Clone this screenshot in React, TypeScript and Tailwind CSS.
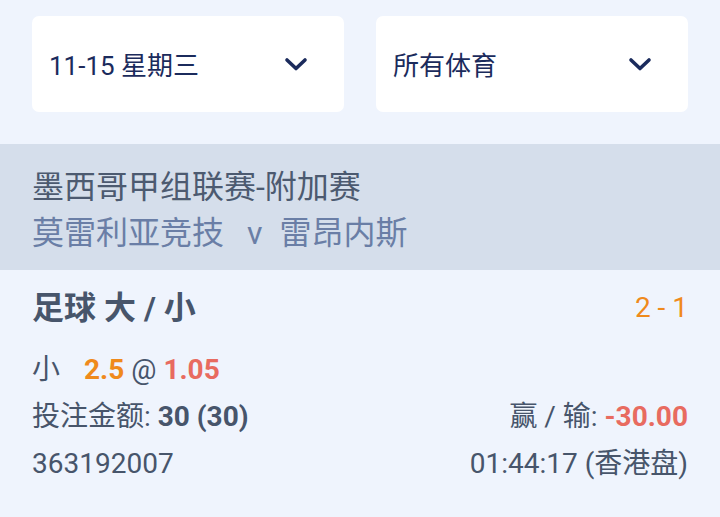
import React from "react";

function Chevron() {
  return (
    <svg width="24" height="15" viewBox="0 0 24 15" fill="none" className="shrink-0">
      <path d="M3 3 L12 11.5 L21 3" stroke="#1b2b5c" strokeWidth="3.6" strokeLinecap="round" strokeLinejoin="round" />
    </svg>
  );
}

function Select({ label }: { label: string }) {
  return (
    <div className="flex-1 h-[96px] bg-white rounded-[7px] flex items-center justify-between pl-[17px] pr-[36px]">
      <span className="text-[26px] text-[#1b2b5c] leading-none pt-[4px]">{label}</span>
      <Chevron />
    </div>
  );
}

export default function App() {
  return (
    <div
      className="w-[720px] h-[517px] bg-[#eff4fd] overflow-hidden"
      style={{ fontFamily: "Roboto, 'Noto Sans CJK SC', sans-serif" }}
    >
      <div className="flex gap-[32px] px-[32px] pt-[16px]">
        <Select label="11-15 星期三" />
        <Select label="所有体育" />
      </div>
      <div className="mt-[32px] bg-[#d5deeb] h-[126px] px-[32px] pt-[20px]">
        <div className="text-[32px] leading-[46px] text-[#4c5a70]">墨西哥甲组联赛-附加赛</div>
        <div className="text-[32px] leading-[46px] text-[#6a7ea6] flex items-baseline">
          <span>莫雷利亚竞技</span>
          <span className="ml-[23px] mr-[17px]">v</span>
          <span>雷昂内斯</span>
        </div>
      </div>
      <div className="px-[32px] pt-[18px] text-[#47556b]">
        <div className="flex justify-between items-center h-[40px]">
          <span className="text-[32px] font-bold">足球 大 / 小</span>
          <span className="text-[28px] text-[#ef8a1c]">2 - 1</span>
        </div>
        <div className="mt-[18px] text-[28px] leading-[47px] flex items-baseline">
          <span className="mr-[24px]">小</span>
          <span className="font-bold text-[#ef8a1c]">2.5</span>
          <span className="mx-[7px]">@</span>
          <span className="font-bold text-[#e86b60]">1.05</span>
        </div>
        <div className="flex justify-between text-[28px] leading-[47px]">
          <span>
            投注金额: <span className="font-bold">30 (30)</span>
          </span>
          <span>
            赢 / 输: <span className="font-bold text-[#e86b60]">-30.00</span>
          </span>
        </div>
        <div className="flex justify-between text-[28px] leading-[47px]">
          <span>363192007</span>
          <span>01:44:17 (香港盘)</span>
        </div>
      </div>
    </div>
  );
}
